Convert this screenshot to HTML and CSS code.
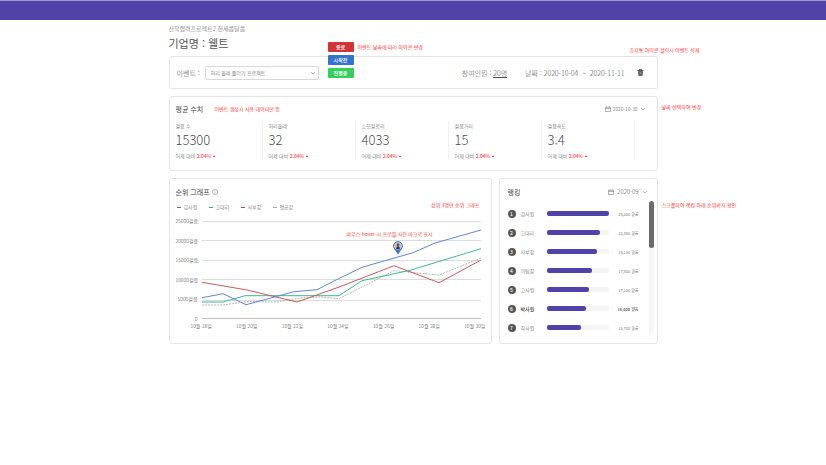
FILE: index.html
```html
<!DOCTYPE html>
<html lang="ko">
<head>
<meta charset="utf-8">
<meta name="viewport" content="width=device-width, initial-scale=1">
<title>웰트</title>
<link rel="stylesheet" href="styles.css">
</head>
<body>
<header class="topbar"></header>
<main class="page">
  <p class="project">산학협력프로젝트2 헌세콤달콤</p>
  <h1 class="company">기업명 : 웰트</h1>

  <section class="card event">
    <label class="event-label" for="event">이벤트 :</label>
    <span class="select-box">
      <select id="event"><option>허리 둘레 줄이기 프로젝트</option></select>
      <svg class="chevron" viewBox="0 0 6 4"><path d="M1 1l2 2 2-2"/></svg>
    </span>
    <span class="people">참여인원 : <a href="#people">20명</a></span>
    <span class="period">날짜 : 2020-10-04 &nbsp;~&nbsp; 2020-11-11</span>
    <button class="trash" aria-label="삭제">
      <svg viewBox="0 0 14 14"><path d="M1 3h12M5 3V1h4v2" fill="none" stroke="#333" stroke-width="1.6"/><path d="M2.2 4.4h9.6L11 13.5H3z" fill="#333"/><path d="M5.2 6.3v5M7 6.3v5M8.8 6.3v5" stroke="#fff" stroke-width=".8"/></svg>
    </button>
    <ul class="badges">
      <li class="badge ended">종료</li>
      <li class="badge waiting">시작전</li>
      <li class="badge running">진행중</li>
    </ul>
    <p class="note note-badge">이벤트 날짜에 따라 아이콘 변경</p>
    <p class="note note-trash">휴지통 아이콘 클릭시 이벤트 삭제</p>
  </section>

  <section class="card averages">
    <div class="card-head">
      <h2>평균 수치</h2>
      <button class="date small">
        <svg class="calendar" viewBox="0 0 12 12"><path d="M1 2.5h10v8.5H1zM1 5h10M3.5 .5v2M8.5 .5v2"/></svg>
        2020-10-30
        <svg class="chevron" viewBox="0 0 6 4"><path d="M1 1l2 2 2-2"/></svg>
      </button>
    </div>
    <div class="stats">
      <div class="stat"><h3>걸음 수</h3><strong>15300</strong><p>어제 대비 <em>2.04%</em></p></div>
      <div class="stat"><h3>허리둘레</h3><strong>32</strong><p>어제 대비 <em>2.04%</em></p></div>
      <div class="stat"><h3>소모칼로리</h3><strong>4033</strong><p>어제 대비 <em>2.04%</em></p></div>
      <div class="stat"><h3>걸음거리</h3><strong>15</strong><p>어제 대비 <em>2.04%</em></p></div>
      <div class="stat"><h3>걸음속도</h3><strong>3.4</strong><p>어제 대비 <em>2.04%</em></p></div>
    </div>
    <p class="note note-average">이벤트 생성시 사용 데이터만 뜸</p>
    <p class="note note-date">날짜 선택하여 변경</p>
  </section>

  <div class="columns">
    <section class="card graph">
      <div class="card-head">
        <h2>순위 그래프</h2>
        <svg class="info" viewBox="0 0 12 12"><circle cx="6" cy="6" r="5.2"/><path d="M6 5.2v3.6M6 3v1"/></svg>
      </div>
      <ul class="legend">
        <li class="blue">김사원</li>
        <li class="green">고대리</li>
        <li class="red">사부장</li>
        <li class="gray">평균값</li>
      </ul>
      <div class="plot">
        <ul class="y-axis"><li>25000걸음</li><li>20000걸음</li><li>15000걸음</li><li>10000걸음</li><li>5000걸음</li><li>0</li></ul>
        <svg class="lines" viewBox="0 0 279 100">
          <path d="M0 1.5h279M0 20.5h279M0 40.5h279M0 59.5h279M0 80.5h279" stroke="#dcdcdc"/>
          <path d="M0 98.5h279" stroke="#bdbdbd"/>
          <polyline points="0,85 21,85 46,81.5 75,82 98,78 118,77 137,78.7 192,50.7 237,55 279,38" stroke="#b5b5b5" stroke-dasharray="2 1"/>
          <polyline points="0,82 21,82 43,75.7 137,75.7 160,60.7 208,50.3 279,28.7" stroke="#3dba8c"/>
          <polyline points="0,62.3 45,70 95,82 138,66.7 192,45.7 237,62.7 279,40" stroke="#c9595b"/>
          <polyline points="0,77.7 21,73.7 44,84.7 92,71.7 115,69.7 138,58 160,47.3 211,32.7 233,23 279,10" stroke="#5f86d8"/>
          <path d="M196 34.5l-3.8-5.5h7.6z" fill="#4478d0" stroke="none"/>
          <circle cx="196" cy="26" r="4.4" fill="#c7c5c0" stroke="#4478d0"/>
          <path d="M194.2 29.3c0-2 .5-3 1.8-3s1.8 1 1.8 3z" fill="#2e3540" stroke="none"/>
          <circle cx="196" cy="24.8" r="1.4" fill="#6d4c44" stroke="none"/>
        </svg>
      </div>
      <ul class="x-axis"><li>10월 18일</li><li>10월 20일</li><li>10월 22일</li><li>10월 24일</li><li>10월 26일</li><li>10월 28일</li><li>10월 30일</li></ul>
      <p class="note note-top">상위 3명만 순위 그래프</p>
      <p class="note note-hover">마우스 hover 시 프로필 사진 마크로 표시</p>
    </section>

    <section class="card ranking">
      <div class="card-head">
        <h2>랭킹</h2>
        <button class="date">
          <svg class="calendar" viewBox="0 0 12 12"><path d="M1 2.5h10v8.5H1zM1 5h10M3.5 .5v2M8.5 .5v2"/></svg>
          2020-09
          <svg class="chevron" viewBox="0 0 6 4"><path d="M1 1l2 2 2-2"/></svg>
        </button>
      </div>
      <div class="rank-body">
        <ol class="ranks">
          <li><b>1</b><span>김사원</span><i><u style="width:100%"></u></i><small>25,000 걸음</small></li>
          <li><b>2</b><span>고대리</span><i><u style="width:87%"></u></i><small>20,300 걸음</small></li>
          <li><b>3</b><span>사부장</span><i><u style="width:81%"></u></i><small>19,150 걸음</small></li>
          <li><b>4</b><span>이팀장</span><i><u style="width:74%"></u></i><small>17,800 걸음</small></li>
          <li><b>5</b><span>고사원</span><i><u style="width:69%"></u></i><small>17,100 걸음</small></li>
          <li class="me"><b>6</b><span>박사원</span><i><u style="width:64%"></u></i><small>16,000 걸음</small></li>
          <li><b>7</b><span>최사원</span><i><u style="width:55%"></u></i><small>15,700 걸음</small></li>
        </ol>
        <div class="track"><div class="thumb"></div></div>
      </div>
      <p class="note note-scroll">스크롤하여 랭킹 아래 순위까지 확인</p>
    </section>
  </div>
</main>
</body>
</html>
```
FILE: styles.css
```css
* { box-sizing: border-box; margin: 0; padding: 0; }
body {
  background: #fff;
  color: #4c4c4c;
  font: 300 5px/8px "Noto Sans CJK KR", sans-serif;
}
ul, ol { list-style: none; }
button, select { font: inherit; color: inherit; background: none; border: 0; appearance: none; }
svg { display: block; flex: none; }

.topbar { height: 20px; border-top: 1px solid #a29bd0; background: #4f42a8; }
.page { max-width: 489px; margin: 0 auto; padding-top: 4px; }
.project { font-size: 6px; line-height: 10px; }
.company { font-size: 11px; line-height: 18px; font-weight: 400; color: #555; margin-bottom: 4px; }

.card { position: relative; border: 1px solid #e4e4e4; border-radius: 3px; }
.card-head { display: flex; align-items: center; height: 12px; }
h2 { font-size: 7px; font-weight: 400; color: #444; }

.event { display: flex; align-items: center; height: 33px; padding: 0 13px 0 7px; font-size: 7px; margin-bottom: 7px; }
.select-box { position: relative; width: 114px; margin-left: 5px; }
.select-box select { display: block; width: 100%; height: 14px; padding-left: 5px; border: 1px solid #d8d8d8; border-radius: 2px; font-size: 5px; }
.select-box .chevron { position: absolute; right: 3px; top: 5px; }
.chevron { width: 6px; height: 4px; fill: none; stroke: #999; stroke-width: .7; }
.people { margin-left: auto; }
.people a { color: inherit; }
.period { margin: 0 12px 0 18px; }
.trash { width: 7px; height: 7px; }
.badges { position: absolute; left: 158px; top: -15px; display: grid; gap: 3px; }
.badge { width: 26px; height: 10px; border-radius: 1px; color: #fff; font-size: 5px; font-weight: 500; line-height: 10px; text-align: center; }
.ended { background: #cf3538; }
.waiting { background: #3474cf; }
.running { background: #35cf60; }

.averages { height: 75px; padding-top: 6px; margin-bottom: 7px; }
.averages .card-head { padding: 0 11px 0 6px; }
.date { display: flex; align-items: center; gap: 3px; margin-left: auto; font-size: 6px; line-height: 8px; }
.date.small { gap: 2px; font-size: 5px; }
.calendar { width: 6px; height: 6px; fill: none; stroke: #666; }
.stats { display: grid; grid-template-columns: repeat(5, 19.1%); margin-top: 6px; }
.stat { height: 39px; padding-left: 6px; border-right: 1px solid #f1f1f1; }
.stat h3 { font-size: 5px; font-weight: 300; line-height: 10px; }
.stat strong { display: block; font-size: 13px; font-weight: 300; line-height: 18px; }
.stat p { line-height: 13px; }
.stat em { font-style: normal; font-weight: 400; color: #f22; }
.stat em::after { content: ""; display: inline-block; margin: 0 0 1px 2px; border: 1px solid transparent; border-top: 0; border-bottom: 2px solid #f22; }

.columns { display: grid; grid-template-columns: 323fr 159fr; gap: 7px; }
.graph, .ranking { height: 166px; padding-top: 7px; }
.graph .card-head { gap: 2px; padding-left: 6px; }
.info { width: 6px; height: 6px; fill: none; stroke: #777; }
.legend { display: flex; gap: 12px; padding-left: 7px; margin-top: 5px; }
.legend li { display: flex; align-items: center; gap: 3px; width: 20px; white-space: nowrap; }
.legend li::before { content: ""; width: 4px; height: 1px; flex: none; }
.legend .blue::before { background: #3f73d3; }
.legend .green::before { background: #24b47e; }
.legend .red::before { background: #c43b3e; }
.legend .gray::before { background: #aaa; }
.plot { display: flex; gap: 4px; padding: 0 10px 0 6px; margin-top: 9px; }
.y-axis { display: flex; flex-direction: column; justify-content: space-between; flex: none; width: 22px; margin: -3px 0; text-align: right; white-space: nowrap; }
.lines { flex: 1; min-width: 0; height: 100px; fill: none; stroke-width: 1; }
.x-axis { display: flex; justify-content: space-between; padding: 0 5px 0 21px; margin-top: 2px; white-space: nowrap; }

.ranking .card-head { padding: 0 9px 0 8px; }
.rank-body { display: flex; justify-content: space-between; padding: 0 3px 0 8px; margin-top: 3px; }
.ranks { flex: 1; padding-top: 3px; }
.ranks li { display: flex; align-items: center; height: 19px; }
.ranks b { width: 8px; height: 8px; border-radius: 50%; background: #555; color: #fff; font-size: 5px; font-weight: 500; line-height: 8px; text-align: center; }
.ranks span { width: 26px; margin-left: 5px; }
.ranks i { flex: 1; height: 5px; border-radius: 2px; background: #f5f5f5; }
.ranks u { display: block; height: 5px; border-radius: 2px; background: #4f42a8; }
.ranks small { width: 30px; font-size: 4px; text-align: right; }
.ranks .me { font-weight: 500; }
.track { width: 5px; height: 133px; margin-left: 10px; border-radius: 3px; background: #f7f7f7; }
.thumb { height: 47px; border-radius: 3px; background: #6b6b6b; }

.note { position: absolute; color: #ff3434; font-size: 5px; font-weight: 400; line-height: 8px; white-space: nowrap; }
.note-badge { left: 188px; top: -14px; }
.note-trash { right: -43px; top: -11px; }
.note-average { left: 45px; top: 8px; }
.note-date { left: 492px; top: 6px; }
.note-top { right: 11px; top: 22px; }
.note-hover { left: 177px; top: 51px; }
.note-scroll { left: 162px; top: 22px; }
```
